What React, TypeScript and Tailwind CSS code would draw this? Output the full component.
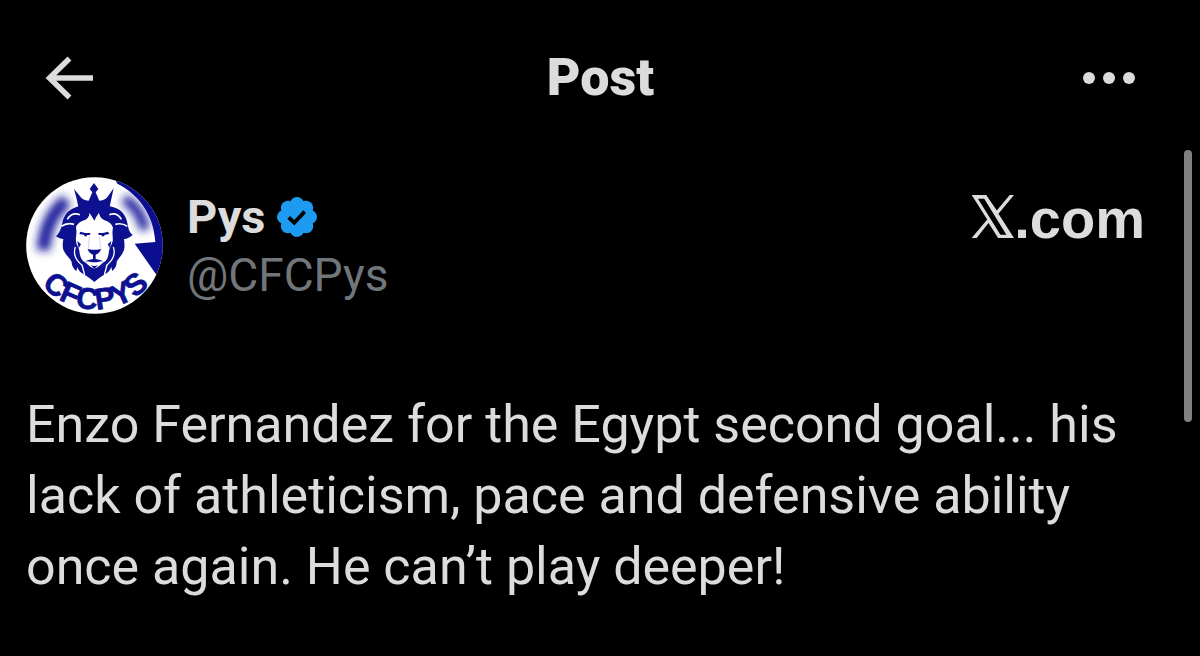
function BackArrow() {
  return (
    <svg viewBox="0 0 48 44" className="h-11 w-12" fill="none" stroke="currentColor" strokeWidth="5.500">
      <path d="M24.500 2.500 4.500 22l20 19.500M4 22h44" />
    </svg>
  );
}

function MoreDots() {
  return (
    <svg viewBox="0 0 54 14" className="h-[14px] w-[54px]" fill="currentColor">
      <circle cx="7" cy="7" r="6" />
      <circle cx="27" cy="7" r="6" />
      <circle cx="47" cy="7" r="6" />
    </svg>
  );
}

function VerifiedBadge() {
  return (
    <svg viewBox="1.600 1.600 18.800 18.800" className="h-10 w-10" role="img" aria-label="Verified account">
      <path
        fill="#1d9bf0"
        d="M20.396 11c-.018-.646-.215-1.275-.57-1.816-.354-.54-.852-.972-1.438-1.246.223-.607.27-1.264.14-1.897-.131-.634-.437-1.218-.882-1.687-.47-.445-1.053-.75-1.687-.882-.633-.13-1.29-.083-1.897.14-.273-.587-.704-1.086-1.245-1.44S11.647 1.62 11 1.604c-.646.017-1.273.213-1.813.568s-.969.854-1.24 1.44c-.608-.223-1.267-.272-1.902-.14-.635.13-1.22.436-1.69.882-.445.47-.749 1.055-.878 1.688-.13.633-.08 1.29.144 1.896-.587.274-1.087.705-1.443 1.245-.356.54-.555 1.17-.574 1.817.02.647.218 1.276.574 1.817.356.54.856.972 1.443 1.245-.224.606-.274 1.263-.144 1.896.13.634.433 1.218.877 1.688.47.443 1.054.747 1.687.878.633.132 1.29.084 1.897-.136.274.586.705 1.084 1.246 1.439.54.354 1.17.551 1.816.569.647-.016 1.276-.213 1.817-.567s.972-.854 1.245-1.44c.604.239 1.266.296 1.903.164.636-.132 1.22-.447 1.68-.907.46-.46.776-1.044.908-1.681s.075-1.299-.165-1.903c.586-.274 1.084-.705 1.439-1.246.354-.54.551-1.17.569-1.816z"
      />
      <path d="m7.100 11.200 2.600 2.500 4.900-5.200" fill="none" stroke="#000" strokeWidth="1.800" />
    </svg>
  );
}

function XLogo() {
  return (
    <svg viewBox="18 14 126 130" className="h-[43px] w-[43px]" role="img" aria-label="X">
      <path
        fill="currentColor"
        fillRule="evenodd"
        d="M18 14h44l32 47 39-47h13l-47 57 47 73H98L69 99l-36 45H18l47-56zM37 25l68 109h18L56 25z"
      />
    </svg>
  );
}

function Avatar() {
  return (
    <svg
      viewBox="36 36 411 411"
      className="h-[137px] w-[137px] shrink-0 overflow-visible"
      role="img"
      aria-label="CFCPYS crest"
    >
      <defs>
        <clipPath id="disc">
          <circle cx="241.500" cy="241.500" r="205" />
        </clipPath>
        <filter id="soft" x="-40%" y="-40%" width="180%" height="180%">
          <feGaussianBlur stdDeviation="12" />
        </filter>
        <path id="smile" d="M64 335A216 216 0 0 0 426 335" />
      </defs>
      <g clipPath="url(#disc)">
        <rect x="36" y="36" width="411" height="411" fill="#fff" />
        <g fill="none" stroke="#1a1f9c" filter="url(#soft)">
          <path d="M88 256C92 192 114 142 158 106" strokeWidth="40" />
          <path d="M330 102C364 122 384 154 392 194" strokeWidth="30" />
        </g>
        {/* corner wedge */}
        <path fill="#0b0f8f" d="M310 56C356 78 418 132 424 231l-62 5 64 92 40 10V36H300z" />
        <g fill="#0d1190">
          {/* crown */}
          <path d="M180 72l17 20c5 9 14 14 27 15l11-25-8-10 13-18 13 18-8 10 11 25c13-1 22-6 27-15l16-22-7 32-6 28H194l-6-28z" />
          {/* mane */}
          <path d="M194 124c-24 6-44 22-49 50l-3 12c-3 12-9 21-16 28 8 5 15 8 22 8-3 16-3 29 4 40 6 11 16 18 21 28-1 10 5 20 14 28 2-5 2-9 2-13 4 11 12 18 22 24 10 6 21 13 30 22 9-9 20-16 30-22 10-6 18-13 21-24 1 4 1 8 3 13 9-8 14-18 13-28 5-10 14-17 19-28 6-11 5-25 3-40 10 0 18-5 26-12-8-6-12-14-14-26-4-30-16-52-54-60z" />
        </g>
        {/* face */}
        <path
          fill="#fff"
          d="M226 143c1 10-5 18-15 23-14 4-23 12-25 22 4 18-2 29 0 40 1 13 8 18 10 30 2 17 6 28 17 34 8 5 14 15 28 19 14-4 20-14 28-19 11-6 14-17 16-34 2-12 9-17 11-30 2-11-3-22 1-40-3-10-11-18-25-22-10-5-16-13-17-23l-8 12-6 12-7-12z"
        />
        <g fill="none" stroke="#fff" strokeWidth="5">
          <path d="M142 184c11-8 24-10 38-6M160 163c8-14 21-20 38-14M340 184c-11-8-22-10-36-6M322 163c-8-14-20-20-36-14" />
          <path d="M184 246c-8 24 6 44 22 56M298 246c8 24-6 44-22 56M204 300l8 30M279 300l-8 30" strokeWidth="4" />
        </g>
        <g fill="#0d1190">
          <path d="M199 200l15 4h16l-3 6h-8v4h-8v-4l-15-3zM282 200l-15 4h-15l3 6h8v4h8v-4l15-3z" />
          <path d="M221 252l12 2h16l12-2c-2 9-8 14-16 17v13c10 2 17 4 24 7-8 0-15 1-21 3h-14c-6-2-13-3-21-3 7-3 14-5 24-7v-13c-8-3-14-8-16-17z" />
          <path d="M230 300c7 4 15 4 22 0l-11 12z" />
          <path d="M229 214l-4 36-4 2 3-35zM254 214l4 36 4 2-4-35z" opacity=".15" />
          <path d="M190 228l11 10-7 12zM292 228l-11 10 7 12z" />
        </g>
      </g>
      <text
        fill="#0d1190"
        stroke="#0d1190"
        strokeWidth="2"
        className="font-['Liberation_Sans',sans-serif] text-[90px] font-bold"
      >
        <textPath href="#smile" startOffset="50%" textAnchor="middle">
          CFCPYS
        </textPath>
      </text>
    </svg>
  );
}

export default function App() {
  return (
    <div className="relative min-h-screen bg-black font-[Roboto,sans-serif] text-[#dcdcdc]">
      <header className="grid grid-cols-3 items-center pt-12 pr-16 pl-[45px]">
        <button type="button" aria-label="Back" className="justify-self-start">
          <BackArrow />
        </button>
        <h1 className="pl-5 text-center text-[52px] leading-[60px] font-black">Post</h1>
        <button type="button" aria-label="More options" className="justify-self-end">
          <MoreDots />
        </button>
      </header>

      <main>
        <section className="flex items-start pt-[69px] pr-[55px] pl-[26px]">
          <Avatar />
          <div className="ml-6 pt-3">
            <div className="flex items-center gap-3">
              <h2 className="text-[47px] leading-[56px] font-bold">Pys</h2>
              <VerifiedBadge />
            </div>
            <p className="text-[46px] leading-[60px] text-[#71767b]">@CFCPys</p>
          </div>
          <div className="ml-auto flex items-baseline pt-[10px]">
            <XLogo />
            <span className="font-['Liberation_Sans',sans-serif] text-[56px] leading-[64px] font-bold">.com</span>
          </div>
        </section>

        <p className="pt-[75px] pr-16 pb-12 pl-[26px] text-[52px] leading-[71px]">
          Enzo Fernandez for the Egypt second goal... his lack of athleticism, pace and defensive ability once again. He
          can’t play deeper!
        </p>
      </main>

      {/* scroll thumb */}
      <div className="absolute top-[150px] right-2 h-[272px] w-2 rounded-full bg-[#808080]" />
    </div>
  );
}
